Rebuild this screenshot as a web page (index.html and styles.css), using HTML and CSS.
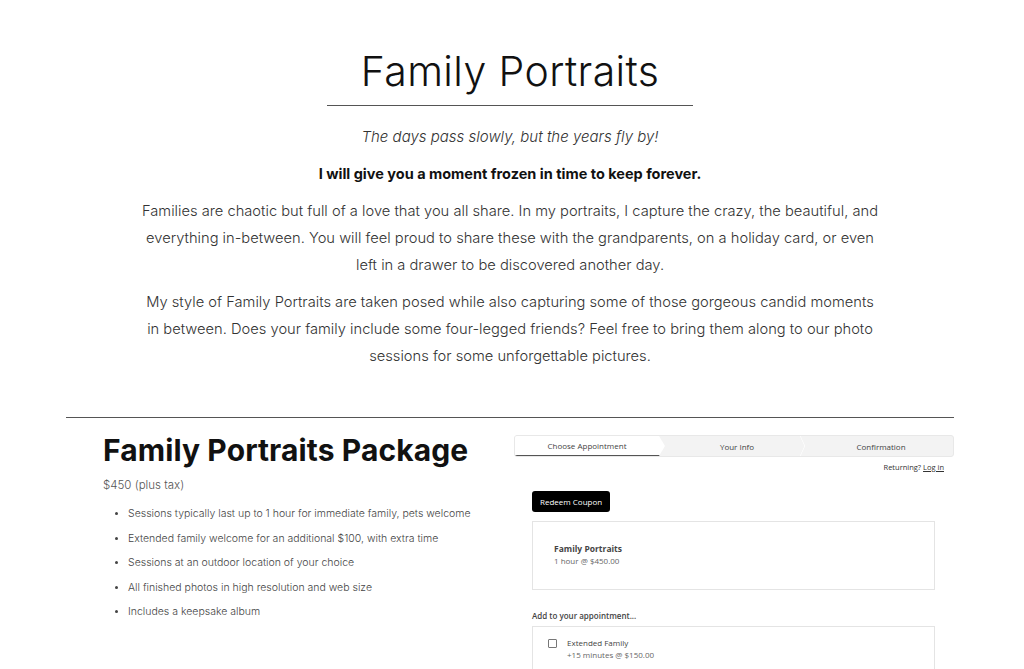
FILE: index.html
```html
<!DOCTYPE html>
<html lang="en">
<head>
<meta charset="utf-8">
<title>Family Portraits</title>
<link rel="stylesheet" href="styles.css">
</head>
<body>
<main class="page">
  <section class="intro">
    <h1 class="title">Family Portraits</h1>
    <hr class="title-rule">
    <p class="tagline">The days pass slowly, but the years fly by!</p>
    <p class="lead">I will give you a moment frozen in time to keep forever.</p>
    <p class="copy">Families are chaotic but full of a love that you all share. In my portraits, I capture the crazy, the beautiful, and everything in-between. You will feel proud to share these with the grandparents, on a holiday card, or even left in a drawer to be discovered another day.</p>
    <p class="copy">My style of Family Portraits are taken posed while also capturing some of those gorgeous candid moments in between. Does your family include some four-legged friends? Feel free to bring them along to our photo sessions for some unforgettable pictures.</p>
  </section>

  <hr class="section-rule">

  <section class="package">
    <div class="pkg-info">
      <h2 class="pkg-title">Family Portraits Package</h2>
      <p class="pkg-price">$450 (plus tax)</p>
      <ul class="pkg-list">
        <li>Sessions typically last up to 1 hour for immediate family, pets welcome</li>
        <li>Extended family welcome for an additional $100, with extra time</li>
        <li>Sessions at an outdoor location of your choice</li>
        <li>All finished photos in high resolution and web size</li>
        <li>Includes a keepsake album</li>
      </ul>
    </div>

    <div class="scheduler">
      <ol class="steps">
        <li class="step step-active">Choose Appointment</li>
        <li class="step step-mid">Your Info</li>
        <li class="step">Confirmation</li>
      </ol>
      <p class="returning">Returning? <a href="#" class="login">Log in</a></p>
      <div class="sched-body">
        <button class="coupon" type="button">Redeem Coupon</button>
        <div class="appt-card">
          <div class="appt-name">Family Portraits</div>
          <div class="appt-meta">1 hour @ $450.00</div>
        </div>
        <div class="addon-label">Add to your appointment...</div>
        <div class="addon-card">
          <span class="checkbox"></span>
          <div>
            <div class="addon-name">Extended Family</div>
            <div class="appt-meta">+15 minutes @ $150.00</div>
          </div>
        </div>
      </div>
    </div>
  </section>
</main>
</body>
</html>
```

FILE: styles.css
```css
* { box-sizing: border-box; }

html, body {
  margin: 0;
  padding: 0;
  background: #ffffff;
  overflow: hidden;
}

body {
  font-family: "Inter", "Open Sans", sans-serif;
  color: #333333;
}

.page {
  width: 888px;
  margin: 0 0 0 66px;
}

.intro {
  display: flex;
  flex-direction: column;
  align-items: center;
  padding-top: 45px;
}

.title {
  margin: 0;
  font-size: 41px;
  font-weight: 300;
  line-height: 52px;
  color: #111111;
  letter-spacing: 0.4px;
}

.title-rule {
  width: 366px;
  margin: 8px 0 0 0;
  border: 0;
  border-top: 1px solid #555555;
}

.tagline {
  margin: 20px 0 0 0;
  font-size: 15px;
  font-style: italic;
  font-weight: 300;
  line-height: 22px;
  color: #333333;
}

.lead {
  margin: 15px 0 0 0;
  font-size: 14.5px;
  font-weight: 700;
  line-height: 22px;
  color: #111111;
}

.copy {
  width: 740px;
  margin: 13px 0 0 0;
  font-size: 14.7px;
  font-weight: 300;
  line-height: 27px;
  text-align: center;
  color: #333333;
}

.copy + .copy {
  margin-top: 10px;
}

.section-rule {
  margin: 47px 0 0 0;
  border: 0;
  border-top: 1px solid #555555;
}

.package {
  display: flex;
}

.pkg-info {
  width: 448px;
  padding: 12px 0 0 37px;
}

.pkg-title {
  margin: 0;
  font-size: 30px;
  font-weight: 700;
  line-height: 40px;
  color: #111111;
  letter-spacing: 0.1px;
}

.pkg-price {
  margin: 8px 0 0 0;
  font-size: 11.5px;
  font-weight: 300;
  color: #555555;
}

.pkg-list {
  margin: 14px 0 0 0;
  padding-left: 25px;
  font-size: 10.5px;
  font-weight: 300;
  line-height: 16px;
  color: #444444;
}

.pkg-list li {
  margin-bottom: 8.5px;
}

.pkg-list li::marker {
  font-size: 9px;
}

.scheduler {
  flex: 1;
  padding-top: 17px;
  font-family: "Open Sans", "Liberation Sans", sans-serif;
  color: #555555;
}

.steps {
  display: flex;
  margin: 0;
  padding: 0;
  list-style: none;
  height: 22px;
  background: #f3f3f3;
  border: 1px solid #e8e8e8;
  border-radius: 3px;
  overflow: hidden;
}

.step {
  position: relative;
  flex: 1;
  display: flex;
  align-items: center;
  justify-content: center;
  font-size: 8px;
  color: #444444;
}

.step-active {
  background: #ffffff;
  border-bottom: 1.5px solid #555555;
  clip-path: polygon(0 0, calc(100% - 6px) 0, 100% 50%, calc(100% - 6px) 100%, 0 100%);
  padding-right: 6px;
}

.step-mid::after {
  content: "";
  position: absolute;
  right: 1px;
  top: 2px;
  width: 15px;
  height: 15px;
  border-top: 1px solid #ffffff;
  border-right: 1px solid #ffffff;
  transform: scaleX(0.45) rotate(45deg);
}

.returning {
  margin: 5px 10px 0 0;
  text-align: right;
  font-size: 7.5px;
  color: #333333;
}

.login {
  color: #333333;
  text-decoration: underline;
}

.sched-body {
  padding: 0 19px 0 18px;
}

.coupon {
  display: block;
  margin-top: 19px;
  height: 21px;
  padding: 0 8px;
  border: 0;
  border-radius: 3px;
  background: #000000;
  color: #ffffff;
  font-family: "Open Sans", "Liberation Sans", sans-serif;
  font-size: 8px;
}

.appt-card {
  margin-top: 9px;
  height: 69px;
  padding: 21px 21px;
  border: 1px solid #e4e4e4;
}

.appt-name {
  font-size: 8.5px;
  font-weight: 700;
  color: #444444;
  line-height: 12px;
}

.appt-meta {
  font-size: 8px;
  color: #666666;
  line-height: 12px;
}

.addon-label {
  margin-top: 20px;
  font-size: 8px;
  font-weight: 600;
  color: #444444;
}

.addon-card {
  display: flex;
  align-items: flex-start;
  gap: 10px;
  margin-top: 5px;
  height: 60px;
  padding: 10px 15px;
  border: 1px solid #e4e4e4;
}

.checkbox {
  width: 9px;
  height: 9px;
  margin-top: 2px;
  border: 1px solid #777777;
  border-radius: 1px;
}

.addon-name {
  font-size: 8px;
  color: #444444;
  line-height: 12px;
}
```
